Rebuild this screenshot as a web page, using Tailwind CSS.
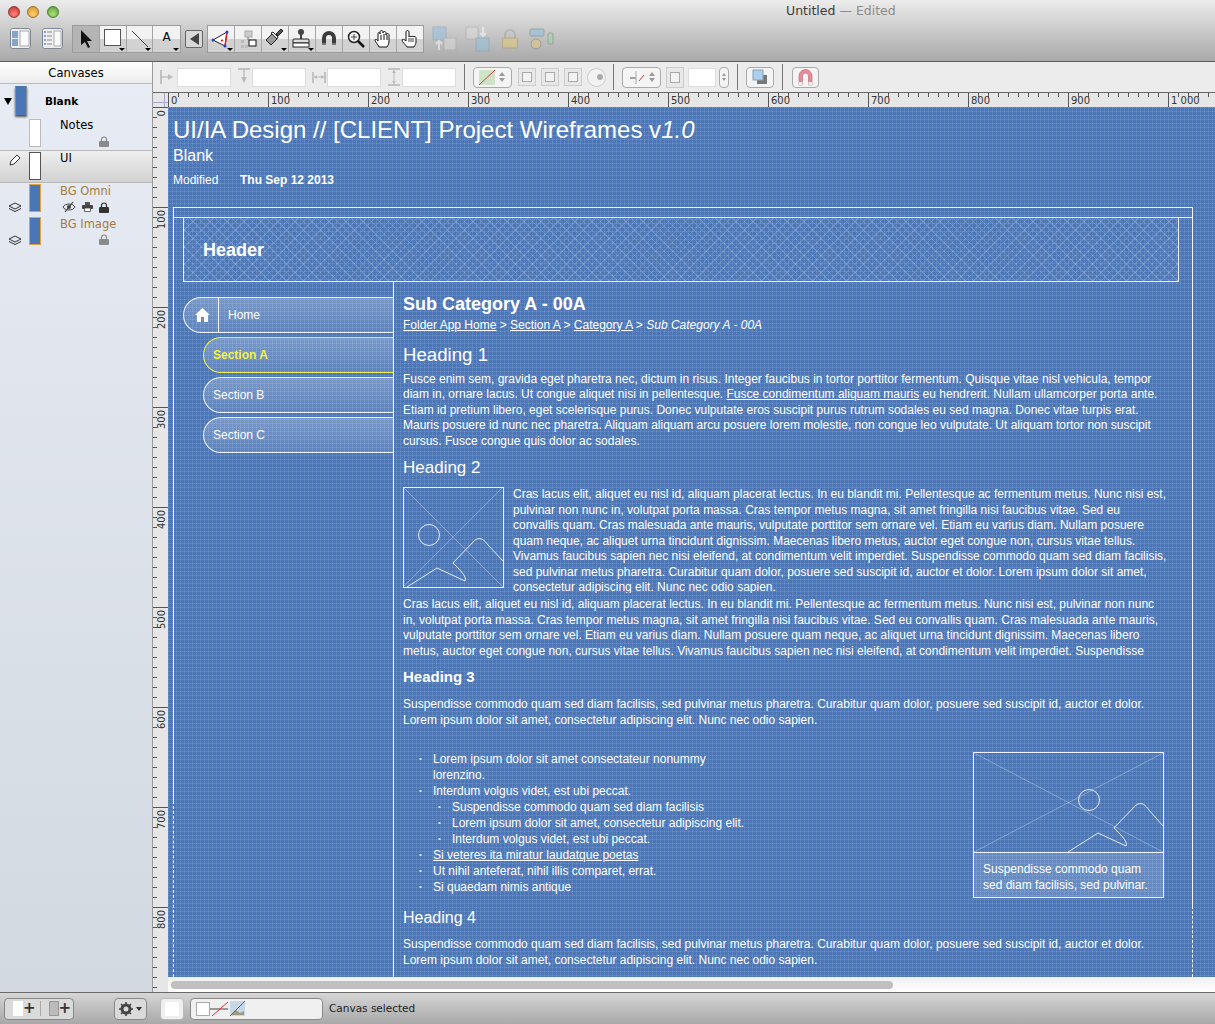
<!DOCTYPE html>
<html lang="en">
<head>
    <meta charset="UTF-8">
    <title>Untitled - Edited</title>
    <script src="https://cdn.jsdelivr.net/npm/@tailwindcss/browser@4"></script>
</head>
<body class="bg-[#e8e8e8]">
<div class="w-[1215px] h-[1024px] overflow-hidden flex flex-col font-['Liberation_Sans',Arial,sans-serif]">

    <!-- Title bar and toolbar -->
    <header class="h-[62px] shrink-0 bg-linear-to-b from-[#ececec] to-[#a9a9a9] border-b border-[#5c5c5c]">
        <div class="h-[23px] flex items-center pl-[8px]">
            <span class="w-[12px] h-[12px] rounded-full border border-[#8a3a3a] bg-[radial-gradient(circle_at_50%_70%,#ff8a80,#c8261f)]"></span>
            <span class="w-[12px] h-[12px] ml-[7px] rounded-full border border-[#94703a] bg-[radial-gradient(circle_at_50%_70%,#ffd070,#d98e1c)]"></span>
            <span class="w-[12px] h-[12px] ml-[8px] rounded-full border border-[#4f7c3a] bg-[radial-gradient(circle_at_50%_70%,#b0e07c,#509a30)]"></span>
            <span class="ml-[727px] whitespace-nowrap text-[12.5px] text-[#3c3c3c] font-['DejaVu_Sans',sans-serif]">Untitled <span class="text-[#8c8c8c]">— Edited</span></span>
        </div>
        <div class="h-[29px] mt-[1px] flex items-center pl-[10px]">
            <svg class="w-[21px] h-[21px]" viewBox="0 0 21 21"><rect x=".5" y=".5" width="20" height="20" rx="2" fill="#eee" stroke="#7d8794"/><rect x="2" y="3" width="6" height="7" fill="#87a5ca"/><rect x="2" y="11" width="6" height="7" fill="#87a5ca"/><rect x="10" y="3" width="9" height="15" fill="#fafafa" stroke="#aaa"/></svg>
            <svg class="w-[21px] h-[21px] ml-[11px]" viewBox="0 0 21 21"><rect x=".5" y=".5" width="20" height="20" rx="2" fill="#eee" stroke="#7d8794"/><path d="M2 4h2M2 8h2M2 12h2M2 16h2" stroke="#87a5ca" stroke-width="2"/><path d="M5 4h5M5 8h5M5 12h5M5 16h5" stroke="#888"/><rect x="12" y="3" width="7" height="15" fill="#fafafa" stroke="#aaa"/></svg>

            <!-- Drawing tools -->
            <div class="ml-[9px] h-[28px] w-[109px] flex border border-[#9b9b9b] bg-linear-to-b from-[#f2f2f2] from-50% to-[#d2d2d2] to-50%">
                <div class="w-[27px] h-full border-r border-[#a5a5a5] bg-[#b4b4b4] flex items-center justify-center">
                    <svg class="w-[16px] h-[20px]" viewBox="0 0 16 20"><path d="M3 1l0 15 4-3 3 6 2-1-3-6 5 0z" fill="#111"/></svg>
                </div>
                <div class="relative w-[27px] h-full border-r border-[#a5a5a5]">
                    <span class="absolute left-[4px] top-[3px] w-[17px] h-[17px] bg-white border border-[#555]"></span>
                    <span class="absolute right-[1px] bottom-[1px] border-x-[3px] border-t-[3px] border-x-transparent border-t-black"></span>
                </div>
                <div class="relative w-[27px] h-full border-r border-[#a5a5a5]">
                    <svg class="absolute inset-0 w-[26px] h-[26px]" viewBox="0 0 26 26"><path d="M5 5L21 21" stroke="#444"/></svg>
                    <span class="absolute right-[1px] bottom-[1px] border-x-[3px] border-t-[3px] border-x-transparent border-t-black"></span>
                </div>
                <div class="relative w-[27px] h-full flex items-center justify-center text-[12px] text-black pb-[3px] font-['DejaVu_Sans',sans-serif]">A
                    <span class="absolute right-[1px] bottom-[1px] border-x-[3px] border-t-[3px] border-x-transparent border-t-black"></span>
                </div>
            </div>
            <div class="ml-[4px] w-[18px] h-[18px] rounded-[2px] border border-[#666] bg-[#d8d8d8] flex items-center justify-center">
                <span class="border-y-[6px] border-r-[9px] border-y-transparent border-r-[#444]"></span>
            </div>

            <!-- Canvas tools -->
            <div class="ml-[4px] h-[28px] w-[217px] flex border border-[#9b9b9b] bg-linear-to-b from-[#f2f2f2] from-50% to-[#d2d2d2] to-50%">
                <div class="relative w-[27px] h-full border-r border-[#a5a5a5]">
                    <svg class="absolute inset-0 w-[26px] h-[26px]" viewBox="0 0 26 26"><path d="M5 14L19 6 17 20z" fill="#fff" stroke="#222"/><path d="M19 6L17 20M13 15l2-1" stroke="#e02020" stroke-width="1.5"/><circle cx="5" cy="14" r="1.5" fill="#2040d0"/><circle cx="19" cy="6" r="1.5" fill="#2040d0"/><circle cx="17" cy="20" r="1.5" fill="#2040d0"/></svg>
                    <span class="absolute right-[1px] bottom-[1px] border-x-[3px] border-t-[3px] border-x-transparent border-t-black"></span>
                </div>
                <div class="w-[27px] h-full border-r border-[#a5a5a5] flex items-center justify-center">
                    <svg class="w-[22px] h-[22px]" viewBox="0 0 22 22"><rect x="8" y="3" width="7" height="6" fill="#ccc" stroke="#aaa"/><path d="M4 12h3v3H4zM4 17h3v3H4zM8 17h3v3H8z" fill="#bbb"/><path d="M11 9v3" stroke="#777"/><rect x="12" y="12" width="7" height="6" fill="#fff" stroke="#111"/></svg>
                </div>
                <div class="relative w-[27px] h-full border-r border-[#a5a5a5]">
                    <svg class="absolute inset-0 w-[26px] h-[26px]" viewBox="0 0 26 26"><path d="M4 14l6-6 5 5-6 6z" fill="#999" stroke="#222"/><path d="M9 7l2-1 5 5-1 2z" fill="#eee" stroke="#222"/><path d="M14 8l5-5 2 2-5 5z" fill="#555" stroke="#222"/></svg>
                    <span class="absolute right-[1px] bottom-[1px] border-x-[3px] border-t-[3px] border-x-transparent border-t-black"></span>
                </div>
                <div class="relative w-[27px] h-full border-r border-[#a5a5a5]">
                    <svg class="absolute inset-0 w-[26px] h-[26px]" viewBox="0 0 26 26"><circle cx="12" cy="6" r="3" fill="#444"/><path d="M11 8h2v5h-2z" fill="#444"/><rect x="4" y="13" width="16" height="4" rx="1" fill="#ddd" stroke="#222"/><rect x="4" y="17" width="16" height="4" fill="#fff" stroke="#222"/></svg>
                    <span class="absolute right-[1px] bottom-[1px] border-x-[3px] border-t-[3px] border-x-transparent border-t-black"></span>
                </div>
                <div class="w-[27px] h-full border-r border-[#a5a5a5] flex items-center justify-center">
                    <svg class="w-[18px] h-[18px]" viewBox="0 0 18 18"><path d="M2 15V8a7 7 0 0 1 14 0v7h-4V8a3 3 0 0 0-6 0v7z" fill="#3c3c3c"/><path d="M2 13h4v2H2zM12 13h4v2h-4z" fill="#fff" opacity=".3"/></svg>
                </div>
                <div class="w-[27px] h-full border-r border-[#a5a5a5] flex items-center justify-center">
                    <svg class="w-[20px] h-[20px]" viewBox="0 0 20 20"><circle cx="8" cy="8" r="5.5" fill="#f4f4f4" stroke="#222" stroke-width="1.5"/><path d="M8 5v6M5 8h6" stroke="#444"/><path d="M12 12l6 6" stroke="#111" stroke-width="2.5"/></svg>
                </div>
                <div class="w-[27px] h-full border-r border-[#a5a5a5] flex items-center justify-center">
                    <svg class="w-[20px] h-[20px]" viewBox="0 0 20 20"><path d="M6 18c-1-3-4-5-4-7 0-1 2-1 3 1V5c0-2 2-2 2 0V3c0-2 3-2 3 0v1c0-2 3-2 3 0v2c0-2 3-2 3 0v6c0 3-1 4-2 6z" fill="#fff" stroke="#111"/><path d="M8 6v5M11 5v6M14 6v5" stroke="#111"/></svg>
                </div>
                <div class="w-[26px] h-full flex items-center justify-center">
                    <svg class="w-[20px] h-[20px]" viewBox="0 0 20 20"><path d="M7 18c-1-2-5-5-5-7 0-1 2-1 4 1V3c0-2 3-2 3 0v5c0-1 2-1 2 0 0-1 2-1 2 0 0-1 3-1 3 1v4c0 2-1 3-2 5z" fill="#fff" stroke="#111"/><path d="M9 9v4M11 9v4M13 9v4" stroke="#111" stroke-width=".8"/></svg>
                </div>
            </div>

            <!-- Disabled arrange tools -->
            <svg class="w-[26px] h-[26px] ml-[8px] opacity-50" viewBox="0 0 26 26"><rect x="1" y="1" width="13" height="13" fill="#8fc0e0" stroke="#8a9aa8"/><rect x="12" y="12" width="12" height="12" fill="#ddd" stroke="#aaa"/><path d="M7 24V16M4 18l3-3 3 3" fill="none" stroke="#fff" stroke-width="2"/></svg>
            <svg class="w-[26px] h-[26px] ml-[7px] opacity-50" viewBox="0 0 26 26"><rect x="1" y="1" width="12" height="12" fill="#ddd" stroke="#aaa"/><rect x="11" y="12" width="13" height="13" fill="#8fc0e0" stroke="#8a9aa8"/><path d="M18 1V9M15 7l3 3 3-3" fill="none" stroke="#fff" stroke-width="2"/></svg>
            <svg class="w-[18px] h-[22px] ml-[10px] opacity-60" viewBox="0 0 18 22"><path d="M4 10V7a5 5 0 0 1 10 0v3" fill="none" stroke="#aaa" stroke-width="2"/><rect x="1.5" y="10" width="15" height="10" rx="1" fill="#e0c880" stroke="#b09a60"/></svg>
            <svg class="w-[26px] h-[24px] ml-[9px] opacity-60" viewBox="0 0 26 24"><rect x="2" y="2" width="14" height="7" rx="1" fill="#8fc0e0" stroke="#888"/><rect x="20" y="6" width="5" height="11" rx="1" fill="#a0d8a8" stroke="#888"/><circle cx="8" cy="17" r="5" fill="#e0c880" stroke="#888"/></svg>
        </div>
    </header>

    <div class="h-[930px] flex shrink-0">
        <!-- Canvases sidebar -->
        <aside class="w-[153px] shrink-0 border-r border-[#9a9a9a] bg-linear-to-b from-[#e8ecf4] to-[#d2d9e1] text-[11.5px] font-['DejaVu_Sans',sans-serif]">
            <div class="h-[22px] border-b border-[#bdbdbd] bg-linear-to-b from-white to-[#ececec] text-center leading-[22px] text-black">Canvases</div>

            <div class="h-[33px] flex">
                <div class="w-[15px] flex items-center pl-[4px] pt-[1px]"><span class="border-x-[4px] border-t-[7px] border-x-transparent border-t-black"></span></div>
                <span class="w-[12px] h-[29px] mt-[2px] bg-[#4a76b6] border-x border-[#8b8f96] shadow-[0_2px_2px_#555]"></span>
                <span class="ml-[18px] mt-[10px] text-[10.5px] font-bold text-black leading-[14px]">Blank</span>
            </div>
            <div class="h-[33px] flex">
                <span class="ml-[29px] w-[12px] h-[28px] mt-[2px] bg-white border border-[#bbb]"></span>
                <div class="ml-[19px] w-[50px]">
                    <p class="leading-[14px] mt-[1px] text-black">Notes</p>
                    <div class="flex justify-end pr-[1px] mt-[4px]">
                        <svg class="w-[10px] h-[11px]" viewBox="0 0 10 11"><path d="M2.5 5V3.5a2.5 2.5 0 0 1 5 0V5" fill="none" stroke="#8a8a8a" stroke-width="1.2"/><rect y="5" width="10" height="6" rx="1" fill="#8a8a8a"/></svg>
                    </div>
                </div>
            </div>
            <div class="h-[33px] flex border-y border-[#b9b9b9] bg-linear-to-b from-[#eeeeee] to-[#d2d2d2]">
                <div class="w-[29px] flex justify-center pt-[3px]">
                    <svg class="w-[12px] h-[12px]" viewBox="0 0 12 12"><path d="M1 11l1-4 6-6 3 3-6 6z" fill="#fff" stroke="#333"/></svg>
                </div>
                <span class="w-[12px] h-[28px] mt-[1px] bg-white border border-[#555]"></span>
                <p class="ml-[19px] leading-[14px] text-black">UI</p>
            </div>
            <div class="h-[33px] flex">
                <div class="w-[29px] flex justify-center items-end pb-[3px]">
                    <svg class="w-[14px] h-[11px]" viewBox="0 0 14 11"><path d="M7 1l6 3-6 3-6-3z" fill="none" stroke="#333"/><path d="M1 6.5l6 3 6-3" fill="none" stroke="#333"/></svg>
                </div>
                <span class="w-[12px] h-[28px] mt-[1px] bg-[#4a76b6] border border-[#dca24a]"></span>
                <div class="ml-[19px] w-[50px]">
                    <p class="leading-[14px] mt-[1px] whitespace-nowrap text-[#a57a3d]">BG Omni</p>
                    <div class="flex items-center justify-end gap-[6px] pr-[1px] mt-[3px]">
                        <svg class="w-[14px] h-[12px]" viewBox="0 0 14 12"><path d="M1 6C3 2 11 2 13 6 11 10 3 10 1 6z" fill="none" stroke="#444"/><circle cx="7" cy="6" r="2" fill="#444"/><path d="M11 1L3 11" stroke="#444" stroke-width="1.2"/></svg>
                        <svg class="w-[11px] h-[10px]" viewBox="0 0 11 10"><path d="M3 0h5v3H3z" fill="#555"/><rect y="3" width="11" height="4" rx="1" fill="#444"/><path d="M2.500 6h6v3.500h-6z" fill="#fff" stroke="#444" stroke-width=".8"/></svg>
                        <svg class="w-[10px] h-[11px]" viewBox="0 0 10 11"><path d="M2.5 5V3.5a2.5 2.5 0 0 1 5 0V5" fill="none" stroke="#333" stroke-width="1.2"/><rect y="5" width="10" height="6" rx="1" fill="#333"/></svg>
                    </div>
                </div>
            </div>
            <div class="h-[33px] flex">
                <div class="w-[29px] flex justify-center items-end pb-[3px]">
                    <svg class="w-[14px] h-[11px]" viewBox="0 0 14 11"><path d="M7 1l6 3-6 3-6-3z" fill="none" stroke="#333"/><path d="M1 6.5l6 3 6-3" fill="none" stroke="#333"/></svg>
                </div>
                <span class="w-[12px] h-[28px] mt-[1px] bg-[#4a76b6] border border-[#dca24a]"></span>
                <div class="ml-[19px] w-[50px]">
                    <p class="leading-[14px] mt-[1px] whitespace-nowrap text-[#a57a3d]">BG Image</p>
                    <div class="flex justify-end pr-[1px] mt-[3px]">
                        <svg class="w-[10px] h-[11px]" viewBox="0 0 10 11"><path d="M2.5 5V3.5a2.5 2.5 0 0 1 5 0V5" fill="none" stroke="#8a8a8a" stroke-width="1.2"/><rect y="5" width="10" height="6" rx="1" fill="#8a8a8a"/></svg>
                    </div>
                </div>
            </div>
        </aside>

        <div class="w-[1062px] flex flex-col">
            <!-- Style inspector bar -->
            <div class="h-[30px] shrink-0 bg-[#ececec] flex items-center pl-[7px]">
                <svg class="w-[14px] h-[18px]" viewBox="0 0 14 18"><path d="M1 2v14" stroke="#999"/><path d="M1 9h8" stroke="#aaa"/><path d="M8 6l5 3-5 3z" fill="#bbb"/></svg>
                <span class="w-[54px] h-[19px] ml-[3px] bg-white border border-[#dcdcdc]"></span>
                <svg class="w-[14px] h-[18px] ml-[6px]" viewBox="0 0 14 18"><path d="M1 1h12" stroke="#999"/><path d="M7 1v9" stroke="#aaa"/><path d="M4 9l3 6 3-6z" fill="#bbb"/></svg>
                <span class="w-[54px] h-[19px] ml-[1px] bg-white border border-[#dcdcdc]"></span>
                <svg class="w-[14px] h-[18px] ml-[6px]" viewBox="0 0 14 18"><path d="M1 4v11M13 4v11" stroke="#999"/><path d="M2 9h10" stroke="#bbb"/><path d="M2 9l3-2v4zM12 9l-3-2v4z" fill="#bbb"/></svg>
                <span class="w-[54px] h-[19px] ml-[1px] bg-white border border-[#dcdcdc]"></span>
                <svg class="w-[14px] h-[18px] ml-[6px]" viewBox="0 0 14 18"><path d="M1 1h12M1 17h12" stroke="#999"/><path d="M7 2v14" stroke="#bbb"/><path d="M7 2l-2 3h4zM7 16l-2-3h4z" fill="#bbb"/></svg>
                <span class="w-[54px] h-[19px] ml-[1px] bg-white border border-[#dcdcdc]"></span>
                <span class="w-px h-[26px] ml-[8px] bg-[#777]"></span>

                <div class="w-[39px] h-[21px] ml-[8px] rounded-[4px] border border-[#aaa] bg-[#f4f4f4] flex items-center pl-[5px] gap-[4px]">
                    <svg class="w-[16px] h-[15px]" viewBox="0 0 16 15"><rect width="16" height="15" fill="#cfe3c8"/><path d="M0 15L16 0" stroke="#e03a3a"/></svg>
                    <span class="flex flex-col gap-[2px]"><span class="border-x-[3px] border-b-[4px] border-x-transparent border-b-[#999]"></span><span class="border-x-[3px] border-t-[4px] border-x-transparent border-t-[#999]"></span></span>
                </div>
                <span class="w-[18px] h-[18px] ml-[6px] border border-[#ccc] bg-[#e8e8e8] flex items-center justify-center"><span class="w-[10px] h-[10px] bg-[#f2f2f2] border border-[#aaa]"></span></span>
                <span class="w-[18px] h-[18px] ml-[5px] border border-[#ccc] bg-[#e8e8e8] flex items-center justify-center"><span class="w-[10px] h-[10px] bg-[#f2f2f2] border border-[#aaa]"></span></span>
                <span class="w-[18px] h-[18px] ml-[5px] border border-[#ccc] bg-[#e8e8e8] flex items-center justify-center"><span class="w-[10px] h-[10px] bg-[#f2f2f2] border border-[#aaa]"></span></span>
                <span class="w-[19px] h-[19px] ml-[5px] rounded-full border border-[#ccc] bg-[#f2f2f2] flex items-center justify-end pr-[2px]"><span class="w-[6px] h-[6px] rounded-full bg-[#aaa]"></span></span>
                <span class="w-px h-[26px] ml-[7px] bg-[#777]"></span>

                <div class="w-[39px] h-[21px] ml-[8px] rounded-[4px] border border-[#aaa] bg-[#f4f4f4] flex items-center pl-[7px] gap-[3px]">
                    <svg class="w-[16px] h-[15px]" viewBox="0 0 16 15"><path d="M0 8h6" stroke="#555"/><path d="M6 1v13" stroke="#aaa"/><path d="M9 11l5-6" stroke="#e03a3a"/></svg>
                    <span class="flex flex-col gap-[2px]"><span class="border-x-[3px] border-b-[4px] border-x-transparent border-b-[#999]"></span><span class="border-x-[3px] border-t-[4px] border-x-transparent border-t-[#999]"></span></span>
                </div>
                <span class="w-[18px] h-[21px] ml-[5px] border border-[#ccc] bg-[#e8e8e8] flex items-center justify-center"><span class="w-[10px] h-[11px] bg-[#f2f2f2] border border-[#aaa]"></span></span>
                <span class="w-[28px] h-[19px] ml-[4px] bg-white border border-[#dcdcdc]"></span>
                <span class="w-[10px] h-[21px] ml-[3px] rounded-[4px] border border-[#aaa] bg-[#f4f4f4] flex flex-col items-center justify-center gap-[2px]"><span class="border-x-[2px] border-b-[3px] border-x-transparent border-b-[#999]"></span><span class="border-x-[2px] border-t-[3px] border-x-transparent border-t-[#999]"></span></span>
                <span class="w-px h-[26px] ml-[8px] bg-[#777]"></span>

                <div class="w-[28px] h-[21px] ml-[8px] rounded-[4px] border border-[#aaa] bg-[#f4f4f4] flex items-center justify-center">
                    <svg class="w-[16px] h-[16px]" viewBox="0 0 16 16"><rect x="5" y="6" width="10" height="9" fill="#777"/><rect x="1" y="1" width="10" height="10" fill="#a9d0ee" stroke="#8ca0b0"/></svg>
                </div>
                <span class="w-px h-[26px] ml-[8px] bg-[#777]"></span>
                <div class="w-[27px] h-[21px] ml-[9px] rounded-[4px] border border-[#aaa] bg-[#f4f4f4] flex items-center justify-center">
                    <svg class="w-[15px] h-[17px]" viewBox="0 0 15 17"><path d="M1 16V7a6.500 6.500 0 0 1 13 0v9h-3.500V7a3 3 0 0 0-6 0v9z" fill="#e58c98" stroke="#a86a72" stroke-width=".6"/><path d="M1 13h3.500v3H1zM10.500 13H14v3h-3.500z" fill="#eee"/></svg>
                </div>
            </div>

            <!-- Horizontal ruler -->
            <div class="h-[15px] shrink-0 flex bg-[#e6e6e6] border-t border-[#666]">
                <div class="w-[15px] shrink-0 relative">
                    <span class="absolute left-0 right-0 top-[9px] h-px bg-[#a9a5cf]"></span>
                    <span class="absolute left-[11px] top-0 bottom-0 w-px bg-[#a9a5cf]"></span>
                </div>
                <div class="flex text-[10px] leading-[10px] text-[#333] font-['DejaVu_Sans',sans-serif] bg-[repeating-linear-gradient(90deg,#555_0_1px,transparent_1px_10px)] bg-[length:1200px_4px] bg-no-repeat">
                    <span class="w-[100px] shrink-0 border-l border-[#555] pl-[2px] pt-[3px] whitespace-nowrap">0</span>
                    <span class="w-[100px] shrink-0 border-l border-[#555] pl-[2px] pt-[3px] whitespace-nowrap">100</span>
                    <span class="w-[100px] shrink-0 border-l border-[#555] pl-[2px] pt-[3px] whitespace-nowrap">200</span>
                    <span class="w-[100px] shrink-0 border-l border-[#555] pl-[2px] pt-[3px] whitespace-nowrap">300</span>
                    <span class="w-[100px] shrink-0 border-l border-[#555] pl-[2px] pt-[3px] whitespace-nowrap">400</span>
                    <span class="w-[100px] shrink-0 border-l border-[#555] pl-[2px] pt-[3px] whitespace-nowrap">500</span>
                    <span class="w-[100px] shrink-0 border-l border-[#555] pl-[2px] pt-[3px] whitespace-nowrap">600</span>
                    <span class="w-[100px] shrink-0 border-l border-[#555] pl-[2px] pt-[3px] whitespace-nowrap">700</span>
                    <span class="w-[100px] shrink-0 border-l border-[#555] pl-[2px] pt-[3px] whitespace-nowrap">800</span>
                    <span class="w-[100px] shrink-0 border-l border-[#555] pl-[2px] pt-[3px] whitespace-nowrap">900</span>
                    <span class="w-[47px] shrink-0 border-l border-[#555] pl-[2px] pt-[3px] whitespace-nowrap">1 000</span>
                </div>
            </div>

            <div class="h-[885px] flex">
                <!-- Vertical ruler -->
                <div class="w-[15px] shrink-0 overflow-hidden flex flex-col bg-[#e6e6e6] text-[10px] leading-[10px] text-[#333] font-['DejaVu_Sans',sans-serif] bg-[repeating-linear-gradient(180deg,#555_0_1px,transparent_1px_10px)] bg-[length:4px_900px] bg-no-repeat">
                    <span class="h-[100px] shrink-0 border-t border-[#555] pl-[4px] pt-[2px]"><span class="block [writing-mode:vertical-rl] rotate-180">0</span></span>
                    <span class="h-[100px] shrink-0 border-t border-[#555] pl-[4px] pt-[2px]"><span class="block [writing-mode:vertical-rl] rotate-180">100</span></span>
                    <span class="h-[100px] shrink-0 border-t border-[#555] pl-[4px] pt-[2px]"><span class="block [writing-mode:vertical-rl] rotate-180">200</span></span>
                    <span class="h-[100px] shrink-0 border-t border-[#555] pl-[4px] pt-[2px]"><span class="block [writing-mode:vertical-rl] rotate-180">300</span></span>
                    <span class="h-[100px] shrink-0 border-t border-[#555] pl-[4px] pt-[2px]"><span class="block [writing-mode:vertical-rl] rotate-180">400</span></span>
                    <span class="h-[100px] shrink-0 border-t border-[#555] pl-[4px] pt-[2px]"><span class="block [writing-mode:vertical-rl] rotate-180">500</span></span>
                    <span class="h-[100px] shrink-0 border-t border-[#555] pl-[4px] pt-[2px]"><span class="block [writing-mode:vertical-rl] rotate-180">600</span></span>
                    <span class="h-[100px] shrink-0 border-t border-[#555] pl-[4px] pt-[2px]"><span class="block [writing-mode:vertical-rl] rotate-180">700</span></span>
                    <span class="h-[100px] shrink-0 border-t border-[#555] pl-[4px] pt-[2px]"><span class="block [writing-mode:vertical-rl] rotate-180">800</span></span>
                </div>

                <div class="w-[1047px] flex flex-col">
                    <!-- Blueprint canvas -->
                    <main class="h-[870px] shrink-0 overflow-hidden pl-[5px] text-white text-[12px] leading-[15.5px] bg-[#4e79ba] [background-image:repeating-conic-gradient(#1c3f801c_0_25%,transparent_0_50%),linear-gradient(#ffffff1a_1px,transparent_1px),linear-gradient(90deg,#ffffff1a_1px,transparent_1px)] [background-size:2px_2px,4px_4px,4px_4px]">
                        <h1 class="mt-[9px] text-[24px] leading-[27px] whitespace-nowrap">UI/IA Design // [CLIENT] Project Wireframes v<em>1.0</em></h1>
                        <p class="mt-[3px] text-[16px] leading-[19px]">Blank</p>
                        <p class="mt-[8px] flex leading-[14px]"><span class="w-[67px]">Modified</span><b>Thu Sep 12 2013</b></p>

                        <!-- Page frame -->
                        <div class="relative mt-[20px] w-[1020px] h-[770px] border-t border-white/90">
                            <span class="absolute left-0 top-0 w-px h-[593px] bg-white/90"></span>
                            <span class="absolute left-0 top-[593px] bottom-0 border-l border-dashed border-white/90"></span>
                            <span class="absolute right-0 top-0 w-px h-[698px] bg-white/90"></span>
                            <span class="absolute right-0 top-[698px] bottom-0 border-l border-dashed border-white/90"></span>

                            <div class="mt-[9px] border-t border-white/90 h-[760px]">
                                <div class="ml-[10px] w-[996px] h-[64px] flex items-center border-x border-b border-white/90 pl-[19px] pt-[2px] text-[18px] font-bold [background-image:repeating-linear-gradient(45deg,#ffffff26_0_1px,transparent_1px_6px),repeating-linear-gradient(-45deg,#ffffff26_0_1px,transparent_1px_6px)]">Header</div>

                                <div class="flex h-[700px]">
                                    <!-- Left navigation -->
                                    <nav class="w-[220px] shrink-0 pl-[10px] pt-[15px]">
                                        <a class="h-[36px] flex items-center rounded-l-[18px] border border-r-0 border-white/90 bg-linear-to-b from-white/25 to-white/10">
                                            <span class="w-[35px] h-full flex items-center justify-center border-r border-white/90 pl-[3px]">
                                                <svg class="w-[15px] h-[14px]" viewBox="0 0 15 14"><path d="M7.500 0L15 7h-2v7H9V9H6v5H2V7H0z" fill="#fff"/></svg>
                                            </span>
                                            <span class="ml-[9px] pt-[1px]">Home</span>
                                        </a>
                                        <a class="h-[36px] mt-[4px] ml-[20px] flex items-center pl-[9px] pt-[2px] rounded-l-[18px] border border-r-0 border-[#f3f04a] bg-linear-to-b from-white/25 to-white/10 font-bold text-[#f6f33c]">Section A</a>
                                        <a class="h-[36px] mt-[4px] ml-[20px] flex items-center pl-[9px] pt-[2px] rounded-l-[18px] border border-r-0 border-white/90 bg-linear-to-b from-white/25 to-white/10">Section B</a>
                                        <a class="h-[36px] mt-[4px] ml-[20px] flex items-center pl-[9px] pt-[2px] rounded-l-[18px] border border-r-0 border-white/90 bg-linear-to-b from-white/25 to-white/10">Section C</a>
                                    </nav>

                                    <!-- Page body -->
                                    <article class="flex-1 border-l border-white/90 pl-[9px] whitespace-nowrap">
                                        <h2 class="mt-[11px] text-[18px] leading-[22px] font-bold">Sub Category A - 00A</h2>
                                        <p class="mt-[3px]"><u>Folder App Home</u> &gt; <u>Section A</u> &gt; <u>Category A</u> &gt; <em>Sub Category A - 00A</em></p>

                                        <h3 class="mt-[9px] text-[18.67px] leading-[24px]">Heading 1</h3>
                                        <div class="mt-[5px]">
                                            <p>Fusce enim sem, gravida eget pharetra nec, dictum in risus. Integer faucibus in tortor porttitor fermentum. Quisque vitae nisl vehicula, tempor</p>
                                            <p>diam in, ornare lacus. Ut congue aliquet nisi in pellentesque. <u>Fusce condimentum aliquam mauris</u> eu hendrerit. Nullam ullamcorper porta ante.</p>
                                            <p>Etiam id pretium libero, eget scelerisque purus. Donec vulputate eros suscipit purus rutrum sodales eu sed magna. Donec vitae turpis erat.</p>
                                            <p>Mauris posuere id nunc nec pharetra. Aliquam aliquam arcu posuere lorem molestie, non congue leo vulputate. Ut aliquam tortor non suscipit</p>
                                            <p>cursus. Fusce congue quis dolor ac sodales.</p>
                                        </div>

                                        <h3 class="mt-[8px] text-[17px] leading-[22px]">Heading 2</h3>
                                        <div class="mt-[8px] flex h-[106px] overflow-hidden">
                                            <svg class="w-[101px] h-[101px] shrink-0" viewBox="0 0 101 101" fill="none">
                                                <rect x=".5" y=".5" width="100" height="100" stroke="#fff" stroke-opacity=".9"/>
                                                <path d="M0 0L100 100M100 0L0 100" stroke="#fff" stroke-opacity=".3"/>
                                                <circle cx="26" cy="48" r="10.500" stroke="#fff" stroke-opacity=".85"/>
                                                <path d="M4 100L34 81 62 94C65 90 54 80 50 76L72 53C78 49 82 54 85 58L100 74" stroke="#fff" stroke-opacity=".85"/>
                                            </svg>
                                            <div class="ml-[9px]">
                                                <p>Cras lacus elit, aliquet eu nisl id, aliquam placerat lectus. In eu blandit mi. Pellentesque ac fermentum metus. Nunc nisi est,</p>
                                                <p>pulvinar non nunc in, volutpat porta massa. Cras tempor metus magna, sit amet fringilla nisi faucibus vitae. Sed eu</p>
                                                <p>convallis quam. Cras malesuada ante mauris, vulputate porttitor sem ornare vel. Etiam eu varius diam. Nullam posuere</p>
                                                <p>quam neque, ac aliquet urna tincidunt dignissim. Maecenas libero metus, auctor eget congue non, cursus vitae tellus.</p>
                                                <p>Vivamus faucibus sapien nec nisi eleifend, at condimentum velit imperdiet. Suspendisse commodo quam sed diam facilisis,</p>
                                                <p>sed pulvinar metus pharetra. Curabitur quam dolor, posuere sed suscipit id, auctor et dolor. Lorem ipsum dolor sit amet,</p>
                                                <p>consectetur adipiscing elit. Nunc nec odio sapien.</p>
                                            </div>
                                        </div>
                                        <div class="mt-[4px]">
                                            <p>Cras lacus elit, aliquet eu nisl id, aliquam placerat lectus. In eu blandit mi. Pellentesque ac fermentum metus. Nunc nisi est, pulvinar non nunc</p>
                                            <p>in, volutpat porta massa. Cras tempor metus magna, sit amet fringilla nisi faucibus vitae. Sed eu convallis quam. Cras malesuada ante mauris,</p>
                                            <p>vulputate porttitor sem ornare vel. Etiam eu varius diam. Nullam posuere quam neque, ac aliquet urna tincidunt dignissim. Maecenas libero</p>
                                            <p>metus, auctor eget congue non, cursus vitae tellus. Vivamus faucibus sapien nec nisi eleifend, at condimentum velit imperdiet. Suspendisse</p>
                                        </div>

                                        <h3 class="mt-[8px] text-[15px] leading-[20px] font-bold">Heading 3</h3>
                                        <div class="mt-[10px]">
                                            <p>Suspendisse commodo quam sed diam facilisis, sed pulvinar metus pharetra. Curabitur quam dolor, posuere sed suscipit id, auctor et dolor.</p>
                                            <p>Lorem ipsum dolor sit amet, consectetur adipiscing elit. Nunc nec odio sapien.</p>
                                        </div>

                                        <div class="flex justify-between pr-[29px]">
                                            <ul class="mt-[23px] leading-[16px] pl-[15px]">
                                                <li class="flex"><span class="w-[15px] pl-[1px] text-[8px] opacity-80">•</span><span>Lorem ipsum dolor sit amet consectateur nonummy<br>lorenzino.</span></li>
                                                <li class="flex"><span class="w-[15px] pl-[1px] text-[8px] opacity-80">•</span><span>Interdum volgus videt, est ubi peccat.</span></li>
                                                <li class="flex ml-[20px]"><span class="w-[14px] text-[8px] opacity-80">•</span><span>Suspendisse commodo quam sed diam facilisis</span></li>
                                                <li class="flex ml-[20px]"><span class="w-[14px] text-[8px] opacity-80">•</span><span>Lorem ipsum dolor sit amet, consectetur adipiscing elit.</span></li>
                                                <li class="flex ml-[20px]"><span class="w-[14px] text-[8px] opacity-80">•</span><span>Interdum volgus videt, est ubi peccat.</span></li>
                                                <li class="flex"><span class="w-[15px] pl-[1px] text-[8px] opacity-80">•</span><u>Si veteres ita miratur laudatque poetas</u></li>
                                                <li class="flex"><span class="w-[15px] pl-[1px] text-[8px] opacity-80">•</span><span>Ut nihil anteferat, nihil illis comparet, errat.</span></li>
                                                <li class="flex"><span class="w-[15px] pl-[1px] text-[8px] opacity-80">•</span><span>Si quaedam nimis antique</span></li>
                                            </ul>
                                            <figure class="mt-[24px] w-[191px] h-[146px] border border-white/90">
                                                <svg class="block w-[189px] h-[99px]" viewBox="0 0 189 99" fill="none">
                                                    <path d="M0 0L189 99M189 0L0 99" stroke="#fff" stroke-opacity=".3"/>
                                                    <circle cx="115" cy="47" r="10.500" stroke="#fff" stroke-opacity=".85"/>
                                                    <path d="M94 99L124 80 152 93C155 89 144 79 140 75L162 52C168 48 172 53 175 57L189 73" stroke="#fff" stroke-opacity=".85"/>
                                                </svg>
                                                <figcaption class="h-[45px] border-t border-white/90 bg-white/15 pl-[9px] pt-[8px] leading-[16px]">Suspendisse commodo quam<br>sed diam facilisis, sed pulvinar.</figcaption>
                                            </figure>
                                        </div>

                                        <h3 class="mt-[10px] text-[16px] leading-[20px]">Heading 4</h3>
                                        <div class="mt-[9px]">
                                            <p>Suspendisse commodo quam sed diam facilisis, sed pulvinar metus pharetra. Curabitur quam dolor, posuere sed suscipit id, auctor et dolor.</p>
                                            <p>Lorem ipsum dolor sit amet, consectetur adipiscing elit. Nunc nec odio sapien.</p>
                                        </div>
                                    </article>
                                </div>
                            </div>
                        </div>
                    </main>

                    <!-- Horizontal scroller -->
                    <div class="h-[15px] shrink-0 bg-linear-to-b from-[#f0f0f0] to-white pl-[3px] pt-[4px]">
                        <div class="w-[722px] h-[8px] rounded-full bg-[#c0c0c0]"></div>
                    </div>
                </div>
            </div>
        </div>
    </div>

    <!-- Bottom status bar -->
    <footer class="h-[32px] shrink-0 flex items-center pl-[4px] border-t border-[#6a6a6a] bg-linear-to-b from-[#d6d6d6] to-[#a8a8a8] font-['DejaVu_Sans',sans-serif]">
        <div class="w-[70px] h-[22px] rounded-[4px] border border-[#888] bg-[#dadada] flex items-center">
            <span class="ml-[8px] w-[10px] h-[15px] bg-white"></span>
            <span class="text-[15px] leading-[15px] font-bold text-[#333]">+</span>
            <span class="ml-[4px] w-px h-[15px] bg-[#aaa]"></span>
            <span class="ml-[8px] w-[10px] h-[15px] bg-[#bbb] border border-[#999]"></span>
            <span class="text-[15px] leading-[15px] font-bold text-[#333]">+</span>
        </div>
        <div class="ml-[40px] w-[33px] h-[22px] rounded-[4px] border border-[#888] bg-[#dadada] flex items-center justify-center gap-[3px]">
            <svg class="w-[14px] h-[14px]" viewBox="0 0 14 14"><circle cx="7" cy="7" r="4" fill="none" stroke="#444" stroke-width="3"/><path d="M7 0v3M7 11v3M0 7h3M11 7h3M2 2l2 2M10 10l2 2M12 2l-2 2M4 10l-2 2" stroke="#444" stroke-width="1.6"/></svg>
            <span class="border-x-[3px] border-t-[4px] border-x-transparent border-t-[#333]"></span>
        </div>
        <span class="ml-[13px] w-[24px] h-[22px] rounded-[4px] border border-[#bbb] bg-[#efefef] flex items-center justify-center"><span class="w-[14px] h-[14px] bg-white"></span></span>
        <div class="ml-[6px] w-[133px] h-[22px] rounded-[4px] border border-[#888] bg-[#f0f0f0] flex items-center pl-[5px]">
            <span class="w-[14px] h-[14px] bg-white border border-[#aaa]"></span>
            <svg class="w-[20px] h-[14px]" viewBox="0 0 20 14"><path d="M0 7h18" stroke="#444"/><path d="M2 14L18 0" stroke="#e03030"/></svg>
            <svg class="w-[15px] h-[15px]" viewBox="0 0 15 15"><rect width="15" height="15" fill="#c6d8e8"/><path d="M1 14l5-5 4 3 4-2v4z" fill="#a09a80"/><path d="M0 15L15 0" stroke="#e03030"/></svg>
        </div>
        <span class="ml-[6px] text-[10.5px] text-[#222]">Canvas selected</span>
    </footer>
</div>
</body>
</html>
